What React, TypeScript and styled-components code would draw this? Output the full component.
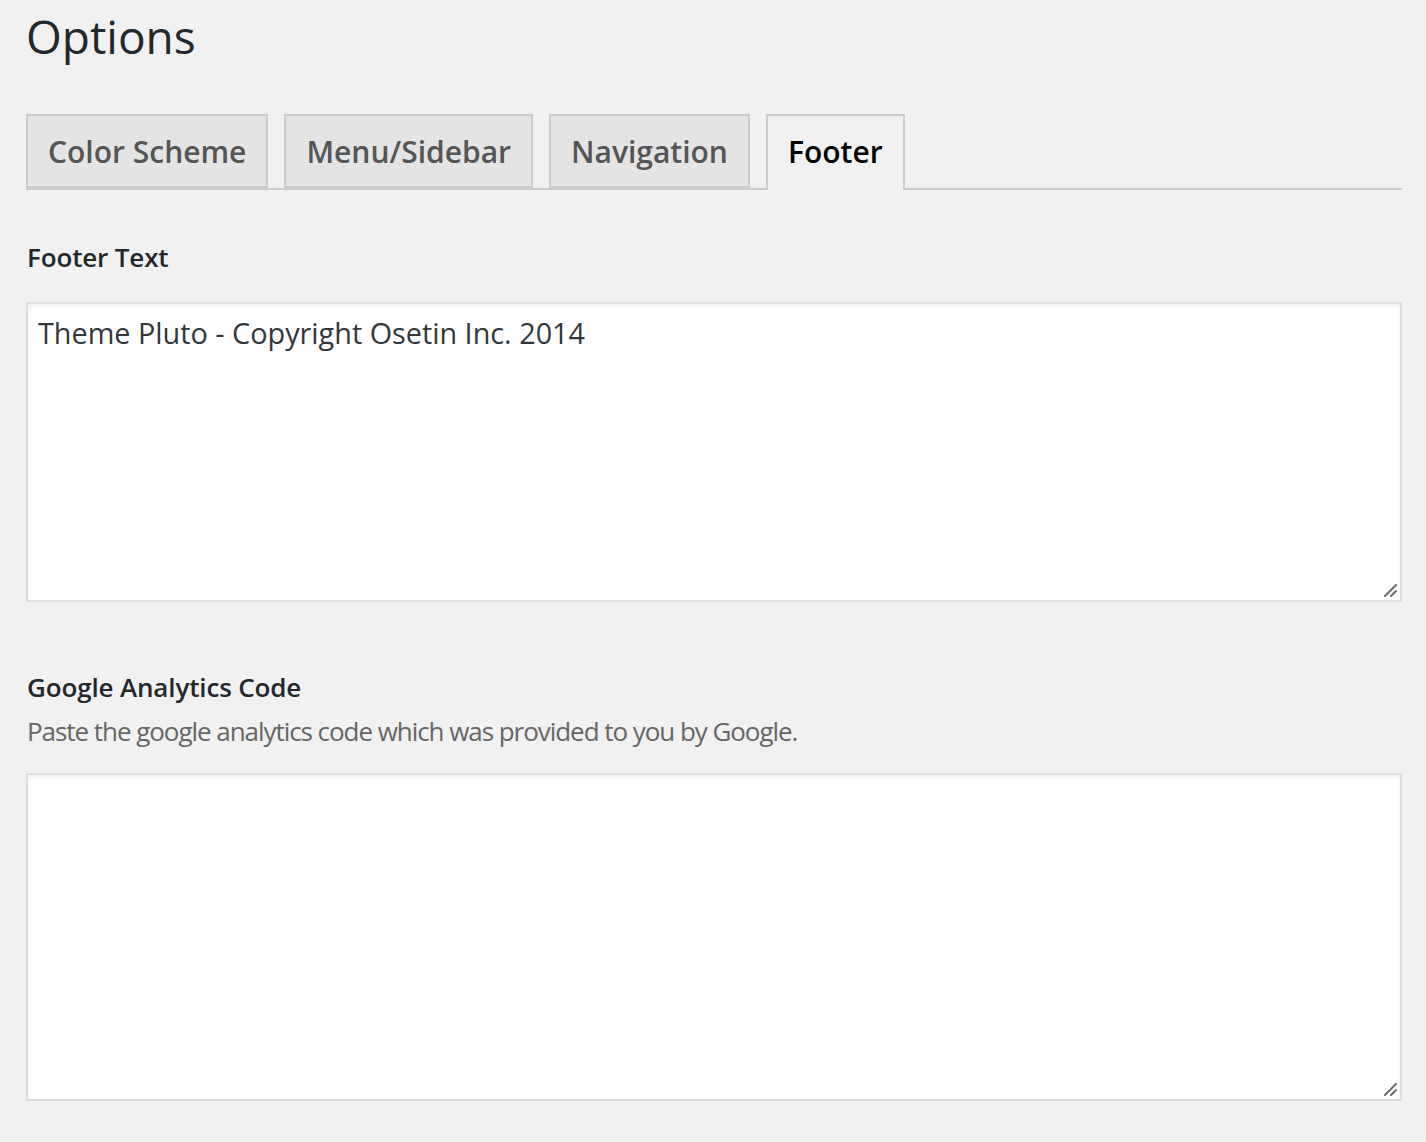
import React from "react";
import styled, { createGlobalStyle } from "styled-components";

const Global = createGlobalStyle`
  html, body { margin: 0; padding: 0; background: #f1f1f1; }
  body { font-family: "Open Sans", "Noto Sans", sans-serif; color: #23282d; }
  * { box-sizing: border-box; }
`;

const Page = styled.div`
  padding: 0 24px 40px 26px;
  width: 1426px;
`;

const Title = styled.h1`
  margin: 0;
  padding: 2px 0 0 0;
  font-size: 46px;
  font-weight: 400;
  line-height: 68px;
  color: #23282d;
`;

const TabBar = styled.div`
  display: flex;
  gap: 16px;
  margin-top: 44px;
  border-bottom: 2px solid #ccc;
  height: 76px;
`;

const Tab = styled.div<{ $active?: boolean }>`
  height: ${(p) => (p.$active ? "76px" : "74px")};
  padding: 0 20px;
  border: 2px solid #ccc;
  border-bottom: ${(p) => (p.$active ? "none" : "2px solid #ccc")};
  background: ${(p) => (p.$active ? "#f1f1f1" : "#e4e4e4")};
  color: ${(p) => (p.$active ? "#000" : "#555")};
  font-size: 30px;
  font-weight: 600;
  line-height: 72px;
  white-space: nowrap;
`;

const Field = styled.section<{ $top: number }>`
  margin-top: ${(p) => p.$top}px;
  display: flex;
  flex-direction: column;
`;

const Label = styled.div`
  font-size: 26px;
  font-weight: 600;
  letter-spacing: -0.15px;
  line-height: 36px;
  color: #23282d;
  padding-left: 1px;
`;

const Description = styled.div`
  font-size: 26px;
  line-height: 36px;
  color: #666;
  letter-spacing: -1.05px;
  margin-top: 8px;
  padding-left: 1px;
`;

const AreaWrap = styled.div<{ $height: number; $gap: number }>`
  position: relative;
  height: ${(p) => p.$height}px;
  margin-top: ${(p) => p.$gap}px;
  width: 1376px;
`;

const Area = styled.textarea`
  display: block;
  width: 100%;
  height: 100%;
  resize: none;
  border: 2px solid #ddd;
  background: #fff;
  box-shadow: inset 0 2px 4px rgba(0, 0, 0, 0.07);
  padding: 6px 10px;
  font-family: "Open Sans", "Noto Sans", sans-serif;
  font-size: 28.8px;
  line-height: 46px;
  color: #32373c;
  outline: none;
`;

const Grip = styled.svg`
  position: absolute;
  right: 4px;
  bottom: 4px;
  width: 14px;
  height: 14px;
  pointer-events: none;
`;

function ResizeGrip() {
  return (
    <Grip viewBox="0 0 14 14">
      <line x1="1" y1="12" x2="12" y2="1" stroke="#6b6b6b" strokeWidth="2" strokeLinecap="round" />
      <line x1="7" y1="12" x2="12" y2="7" stroke="#6b6b6b" strokeWidth="2" strokeLinecap="round" />
    </Grip>
  );
}

export default function App() {
  return (
    <Page>
      <Global />
      <Title>Options</Title>
      <TabBar>
        <Tab>Color Scheme</Tab>
        <Tab>Menu/Sidebar</Tab>
        <Tab>Navigation</Tab>
        <Tab $active>Footer</Tab>
      </TabBar>
      <Field $top={49}>
        <Label>Footer Text</Label>
        <AreaWrap $height={300} $gap={27}>
          <Area defaultValue="Theme Pluto - Copyright Osetin Inc. 2014" />
          <ResizeGrip />
        </AreaWrap>
      </Field>
      <Field $top={67}>
        <Label>Google Analytics Code</Label>
        <Description>Paste the google analytics code which was provided to you by Google.</Description>
        <AreaWrap $height={328} $gap={24}>
          <Area defaultValue="" />
          <ResizeGrip />
        </AreaWrap>
      </Field>
    </Page>
  );
}
